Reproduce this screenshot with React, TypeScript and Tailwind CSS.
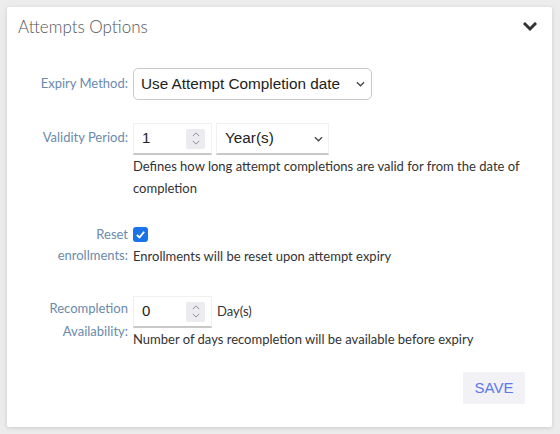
import React from 'react';

const lato = { fontFamily: 'Lato, "Open Sans", sans-serif' };
const arial = { fontFamily: '"Liberation Sans", Arial, sans-serif' };

const SmallChevron: React.FC<{ className?: string }> = ({ className = '' }) => (
  <svg viewBox="0 0 10 6" className={className} fill="none" stroke="currentColor" strokeWidth="1.4">
    <polyline points="1,1 5,5 9,1" />
  </svg>
);

const Spinner: React.FC = () => (
  <div className="flex flex-col items-center justify-center gap-[3px] w-[19px] h-[20px] bg-[#ebebf0] rounded-[2px] text-[#8a8a96]">
    <svg viewBox="0 0 10 6" className="w-[8px] h-[5px]" fill="none" stroke="currentColor" strokeWidth="1.2">
      <polyline points="1,5 5,1 9,5" />
    </svg>
    <svg viewBox="0 0 10 6" className="w-[8px] h-[5px]" fill="none" stroke="currentColor" strokeWidth="1.2">
      <polyline points="1,1 5,5 9,1" />
    </svg>
  </div>
);

const NumberBox: React.FC<{ value: string }> = ({ value }) => (
  <div className="flex items-center justify-between w-[79px] h-[32px] pl-[8px] pr-[6px] border border-[#f0f0f0] border-b-2 border-b-[#c8c8c8] bg-white text-[15px] text-[#222]" style={arial}>
    <span>{value}</span>
    <Spinner />
  </div>
);

const Label: React.FC<{ children: React.ReactNode; className?: string }> = ({ children, className = '' }) => (
  <div className={`w-[115px] shrink-0 pr-[5px] text-right text-[13px] text-[#6a8aac] ${className}`} style={lato}>
    {children}
  </div>
);

export default function App() {
  return (
    <div className="w-[560px] h-[434px] bg-[#ececec] pt-[7px] pl-[7px]">
      <div className="w-[545px] h-[420px] bg-white rounded-[2px] shadow-[0_1px_4px_rgba(0,0,0,0.15)] flex flex-col">
        <div className="flex items-center justify-between pl-[11px] pr-[15px] pt-[4px] h-[36px]">
          <span className="text-[17px] font-light text-[#555]" style={lato}>Attempts Options</span>
          <svg viewBox="0 0 14 10" className="w-[14px] h-[10px] text-[#333]" fill="none" stroke="currentColor" strokeWidth="3" strokeLinecap="square">
            <polyline points="2,2 7,7 12,2" />
          </svg>
        </div>

        <div className="pl-[11px] pr-[27px]">
          {/* Expiry method */}
          <div className="flex items-center mt-[25px]">
            <Label>Expiry Method:</Label>
            <div className="flex items-center justify-between w-[239px] h-[32px] border border-[#c9c9c9] rounded-[5px] pl-[7px] pr-[6px] text-[15.3px] text-[#222]" style={arial}>
              <span>Use Attempt Completion date</span>
              <SmallChevron className="w-[9px] h-[6px] text-[#444]" />
            </div>
          </div>

          {/* Validity period */}
          <div className="flex items-start mt-[23px]">
            <Label className="pt-[5px]">Validity Period:</Label>
            <div className="flex-1">
              <div className="flex gap-[4px]">
                <NumberBox value="1" />
                <div className="flex items-center justify-between w-[113px] h-[32px] border border-[#f0f0f0] border-b-2 border-b-[#c8c8c8] pl-[8px] pr-[5px] text-[15.3px] text-[#222]" style={arial}>
                  <span>Year(s)</span>
                  <SmallChevron className="w-[9px] h-[6px] text-[#444]" />
                </div>
              </div>
              <p className="text-[13px] leading-[22px] text-[#333]" style={lato}>
                Defines how long attempt completions are valid for from the date of completion
              </p>
            </div>
          </div>

          {/* Reset enrollments */}
          <div className="flex items-start mt-[24px]">
            <Label className="leading-[21px] pt-[1px]">Reset<br />enrollments:</Label>
            <div className="flex-1">
              <div className="h-[22px] flex items-center">
                <div className="w-[15px] h-[15px] rounded-[3px] bg-[#1a73e8] flex items-center justify-center">
                  <svg viewBox="0 0 12 12" className="w-[11px] h-[11px]" fill="none" stroke="white" strokeWidth="2">
                    <polyline points="2,6.5 5,9.2 10,3" />
                  </svg>
                </div>
              </div>
              <p className="text-[13px] leading-[22px] text-[#333]" style={lato}>
                Enrollments will be reset upon attempt expiry
              </p>
            </div>
          </div>

          {/* Recompletion availability */}
          <div className="flex items-start mt-[29px]">
            <Label className="leading-[23px] pt-[1px]">Recompletion<br />Availability:</Label>
            <div className="flex-1">
              <div className="flex items-center gap-[5px]">
                <NumberBox value="0" />
                <span className="text-[13px] text-[#333]" style={lato}>Day(s)</span>
              </div>
              <p className="text-[13px] leading-[22px] text-[#333]" style={lato}>
                Number of days recompletion will be available before expiry
              </p>
            </div>
          </div>

          <div className="flex justify-end mt-[22px]">
            <button className="w-[62px] h-[32px] bg-[#f2f2f6] rounded-[2px] text-[15px] text-[#5a78f0]" style={arial}>
              SAVE
            </button>
          </div>
        </div>
      </div>
    </div>
  );
}
